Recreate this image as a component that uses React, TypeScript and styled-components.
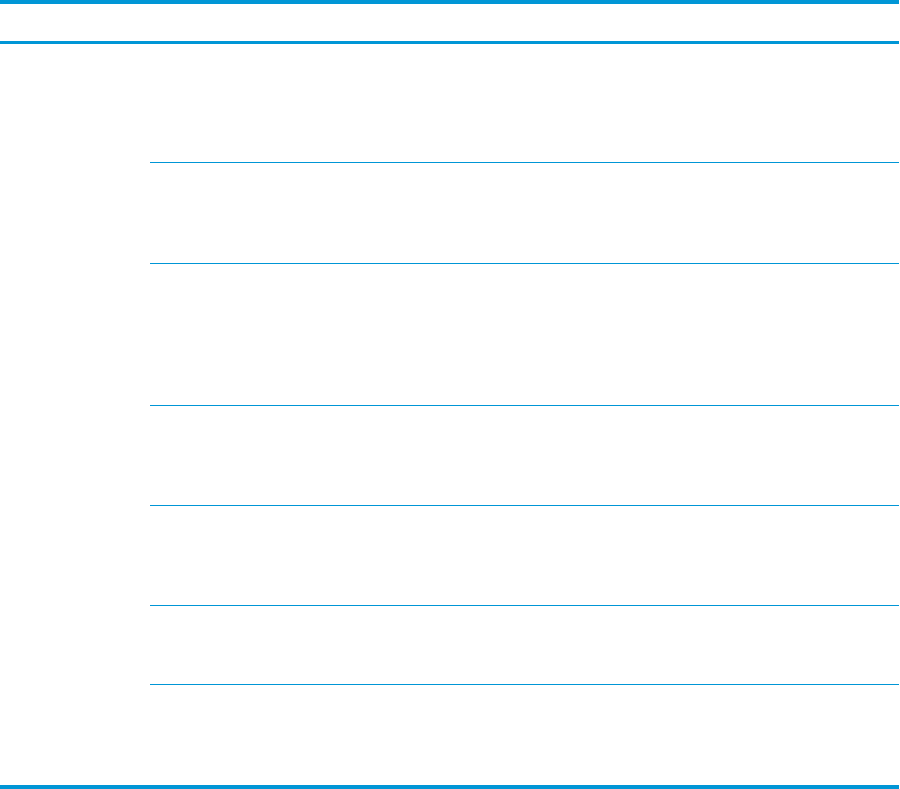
import * as React from "react";
import styled, { createGlobalStyle } from "styled-components";

const blue = "#0096d6";

// heights include each row's bottom rule
const rows = [
  { height: 119 },
  { height: 101 },
  { height: 142 },
  { height: 100 },
  { height: 100 },
  { height: 79 },
  { height: 104, last: true },
];

const App: React.FC = () => {
  return (
    <>
      <GlobalStyle />
      <SpecTable>
        <HeadCell $span={2} />
        <HeadCell $span={1} />
        <GroupCell $rows={rows.length} />
        {rows.map((row, i) => (
          <React.Fragment key={i}>
            <BodyCell $height={row.height} $last={row.last} />
            <BodyCell $height={row.height} $last={row.last} />
          </React.Fragment>
        ))}
      </SpecTable>
    </>
  );
};

export default App;

const GlobalStyle = createGlobalStyle`
  * {
    box-sizing: border-box;
  }
  body {
    margin: 0;
    background: #fff;
    font-family: "Liberation Sans", Arial, sans-serif;
  }
`;

const SpecTable = styled.div`
  display: grid;
  grid-template-columns: 150px 596px 153px;
  width: 899px;
`;

const HeadCell = styled.div<{ $span: number }>`
  grid-column: span ${(p) => p.$span};
  height: 44px;
  border-top: 4px solid ${blue};
  border-bottom: 3px solid ${blue};
`;

const GroupCell = styled.div<{ $rows: number }>`
  grid-column: 1;
  grid-row: 2 / span ${(p) => p.$rows};
  border-bottom: 4px solid ${blue};
`;

const BodyCell = styled.div<{ $height: number; $last?: boolean }>`
  height: ${(p) => p.$height}px;
  border-bottom: ${(p) => (p.$last ? "4px" : "1px")} solid ${blue};
`;
